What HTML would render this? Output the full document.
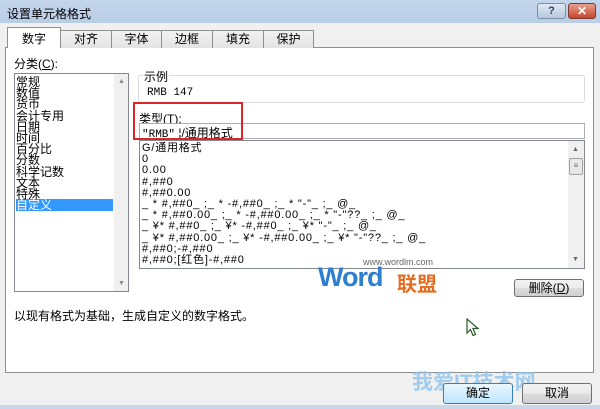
<!DOCTYPE html>
<html><head><meta charset="utf-8"><style>
*{margin:0;padding:0;box-sizing:border-box}
body{width:600px;height:409px;overflow:hidden;background:#f0f0f0;font-family:"Liberation Sans","Noto Sans CJK SC",sans-serif;font-size:12px;color:#000;position:relative}
.a{position:absolute}
.title{left:0;top:0;width:600px;height:23px;background:linear-gradient(#c4d6ec,#b9cde6);}
.tab{position:absolute;top:30px;height:18px;border:1px solid #8e8f8f;border-bottom:none;background:linear-gradient(#f2f2f2,#e3e3e3);text-align:center;line-height:16px;font-size:12px}
.btn{position:absolute;border:1px solid #707070;border-radius:3px;background:linear-gradient(#f2f2f2 0,#ebebeb 50%,#dddddd 51%,#cfcfcf);text-align:center;font-size:12px}
.mono{font-family:"Liberation Mono","Noto Sans CJK SC",monospace;font-size:11px}
.list div{height:11.2px;line-height:11.2px;white-space:pre}
.fmt div{letter-spacing:0.8px}
</style></head><body>
<div class="a title"></div>
<div class="a" style="left:7px;top:5px;font-size:12px">设置单元格格式</div>
<div class="a" style="left:537px;top:3px;width:29px;height:16px;border:1px solid #7d8fa8;border-radius:3px;background:linear-gradient(#dfe8f3,#b7c8de);text-align:center;font-size:11px;color:#345;line-height:14px;font-weight:bold">?</div>
<div class="a" style="left:568px;top:3px;width:28px;height:16px;border:1px solid #7a3a30;border-radius:3px;background:linear-gradient(#e8a08f,#c5452e);text-align:center;font-size:12px;color:#fff;line-height:14px;font-weight:bold">✕</div>

<div class="a" style="left:5px;top:47px;width:589px;height:326px;background:#fff;border:1px solid #8e8f8f"></div>
<div class="tab" style="left:60px;width:52px">对齐</div>
<div class="tab" style="left:111px;width:51px">字体</div>
<div class="tab" style="left:161px;width:52px">边框</div>
<div class="tab" style="left:212px;width:52px">填充</div>
<div class="tab" style="left:263px;width:51px">保护</div>
<div class="tab" style="left:7px;top:27px;height:21px;width:54px;background:#fff;line-height:22px">数字</div>

<div class="a" style="left:14px;top:55px">分类(<u>C</u>):</div>
<div class="a" style="left:14px;top:73px;width:115px;height:219px;border:1px solid #828790;background:#fff"></div>
<div class="a" style="left:114px;top:74px;width:14px;height:217px;background:#f0f0f0"></div>
<div class="a" style="left:118px;top:78px;font-size:7px;color:#888">▲</div>
<div class="a" style="left:118px;top:280px;font-size:7px;color:#888">▼</div>
<div class="a" style="left:16px;top:199px;width:97px;height:12px;background:#3399ff"></div>
<div class="a list" style="left:16px;top:77px;font-size:12px">
<div>常规</div><div>数值</div><div>货币</div><div>会计专用</div><div>日期</div><div>时间</div><div>百分比</div><div>分数</div><div>科学记数</div><div>文本</div><div>特殊</div><div style="color:#fff">自定义</div></div>

<div class="a" style="left:138px;top:75px;width:447px;height:28px;border:1px solid #dcdcdc;border-radius:3px"></div>
<div class="a" style="left:143px;top:68px;background:#fff;padding:0 1px;font-size:12px">示例</div>
<div class="a mono" style="left:147px;top:87px">RMB 147</div>
<div class="a" style="left:139px;top:110px">类型(<u>T</u>):</div>
<div class="a" style="left:139px;top:123px;width:446px;height:16px;border:1px solid #abadb3;background:#fff"></div>
<div class="a" style="left:142px;top:124px;font-size:12px"><span class="mono">"RMB"</span> ¦/通用格式</div>
<div class="a" style="left:133px;top:102px;width:110px;height:38px;border:2px solid #d9262b"></div>

<div class="a" style="left:139px;top:140px;width:446px;height:129px;border:1px solid #828790;background:#fff"></div>
<div class="a" style="left:568px;top:141px;width:16px;height:127px;background:#f0f0f0"></div>
<div class="a" style="left:569px;top:158px;width:14px;height:17px;border:1px solid #a0a0a0;border-radius:2px;background:#e8e8e8;font-size:8px;text-align:center;line-height:14px;color:#666">≡</div>
<div class="a" style="left:572px;top:146px;font-size:7px;color:#666">▲</div>
<div class="a" style="left:572px;top:256px;font-size:7px;color:#666">▼</div>
<div class="a list fmt" style="left:142px;top:143px;font-size:11px">
<div>G/通用格式</div><div>0</div><div>0.00</div><div>#,##0</div><div>#,##0.00</div>
<div>_ * #,##0_ ;_ * -#,##0_ ;_ * "-"_ ;_ @_</div>
<div>_ * #,##0.00_ ;_ * -#,##0.00_ ;_ * "-"??_ ;_ @_</div>
<div>_ ¥* #,##0_ ;_ ¥* -#,##0_ ;_ ¥* "-"_ ;_ @_</div>
<div>_ ¥* #,##0.00_ ;_ ¥* -#,##0.00_ ;_ ¥* "-"??_ ;_ @_</div>
<div>#,##0;-#,##0</div><div>#,##0;[红色]-#,##0</div></div>

<div class="a" style="left:363px;top:257px;font-size:9px;color:#666">www.wordlm.com</div>
<div class="a" style="left:318px;top:262px;font-size:27px;font-weight:bold;color:#2f7fd1;letter-spacing:-1px">Word</div>
<div class="a" style="left:397px;top:268px;font-size:20px;font-weight:bold;color:#e46c22">联盟</div>

<div class="btn" style="left:514px;top:279px;width:70px;height:18px;line-height:16px">删除(<u>D</u>)</div>
<div class="a" style="left:14px;top:307px">以现有格式为基础，生成自定义的数字格式。</div>
<svg class="a" style="left:466px;top:318px" width="14" height="20" viewBox="0 0 14 20"><path d="M1 1 L1 15 L4.5 11.5 L7 17.5 L9.5 16.5 L7 10.5 L12 10.5 Z" fill="#fff" stroke="#2a5a2a" stroke-width="1.2"/></svg>

<div class="a" style="left:412px;top:366px;font-size:21px;font-weight:bold;color:#8fc4ee;opacity:.8">我爱IT技术网</div>
<div class="btn" style="left:443px;top:383px;width:70px;height:21px;line-height:19px;border-color:#3c7fb1;background:linear-gradient(#eaf6fd,#bee6fd)">确定</div>
<div class="btn" style="left:522px;top:383px;width:70px;height:21px;line-height:19px">取消</div>
<div class="a" style="left:0;top:405px;width:600px;height:4px;background:#c9d7e8"></div>
</body></html>
